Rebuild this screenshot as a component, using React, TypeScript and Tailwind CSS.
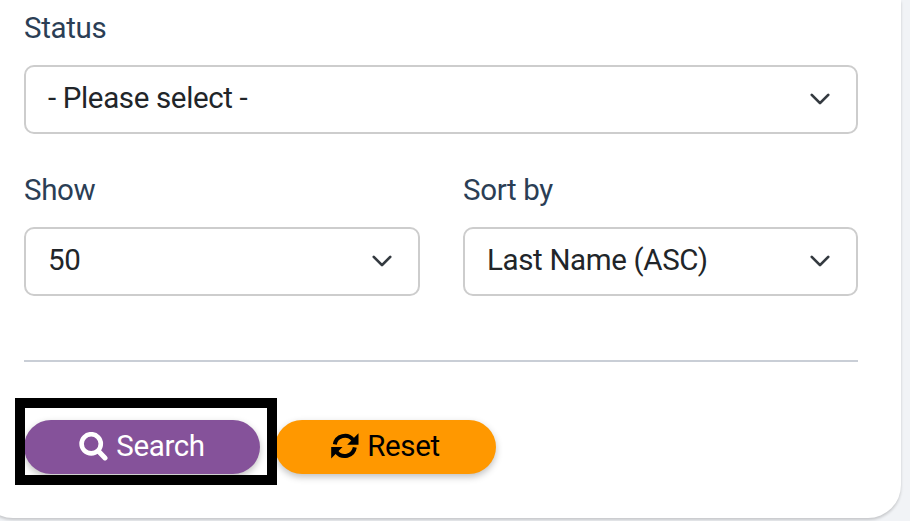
interface SelectFieldProps {
  label: string;
  value: string;
  className?: string;
}

const SearchIcon = () => (
  <svg className="h-[29px] w-[29px]" viewBox="0 0 29 29" fill="none" stroke="currentColor">
    <circle cx="12.2" cy="11.8" r="9.6" strokeWidth="4.6" />
    <path d="m19.3 19 6.7 6.9" strokeWidth="5" strokeLinecap="round" />
  </svg>
);

const RefreshIcon = () => (
  <svg className="h-[26px] w-7" viewBox="0 0 28 26" fill="none">
    <path
      d="M3.8 11.4A10.2 10.2 0 0 1 22 6.8M23.8 14.4A10.2 10.2 0 0 1 5.6 19"
      stroke="currentColor"
      strokeWidth="4"
    />
    <path d="M27.5.3v11.4H16.2zM.2 25.5V14.1h11.3z" fill="currentColor" />
  </svg>
);

const SelectField = ({ label, value, className = "" }: SelectFieldProps) => {
  return (
    <div className={`flex flex-col ${className}`}>
      <label className="h-[43px] text-[29.5px] leading-9 tracking-[-0.35px] text-[#2b3e55] whitespace-nowrap">
        {label}
      </label>
      <button className="mt-3 flex h-[69px] items-center justify-between rounded-[10px] border-2 border-[#cdcdcd] bg-white pl-[22px] pr-[25px] text-[29.5px] leading-9 tracking-[-0.35px] text-[#212529]">
        <span className="whitespace-nowrap -mt-[3px]">{value}</span>
        <svg className="-mt-0.5 h-[22px] w-[22px]" viewBox="0 0 16 16" fill="none">
          <path
            d="m2 5 6 6 6-6"
            stroke="#343a40"
            strokeWidth="2"
            strokeLinecap="round"
            strokeLinejoin="round"
          />
        </svg>
      </button>
    </div>
  );
};

export default function App() {
  return (
    <div className="h-[521px] w-[923px] overflow-hidden bg-white font-['Roboto',sans-serif]">
      <div className="h-[521px] w-[910px] overflow-hidden bg-[#f1f3f6]">
        <div className="-ml-5 h-[518px] w-[921px] rounded-b-[33px] bg-white pt-2.5 pr-[43px] pl-11 shadow-[0_2px_3px_rgba(0,0,0,0.18)]">
          <SelectField label="Status" value="- Please select -" />

          <div className="mt-[38px] flex gap-[43px]">
            <SelectField label="Show" value="50" className="w-[396px]" />
            <SelectField label="Sort by" value="Last Name (ASC)" className="w-[395px]" />
          </div>

          <hr className="mt-[64px] border-t-2 border-[#c9ced6]" />

          <div className="relative mt-[58px] flex gap-[15px]">
            <button className="flex h-[54px] w-[236px] items-center justify-center gap-2 rounded-full bg-[#85529a] pb-0.5 text-[29.5px] tracking-[-0.35px] text-white shadow-[0_3px_7px_rgba(0,0,0,0.25)]">
              <SearchIcon />
              <span>Search</span>
            </button>
            <button className="flex h-[54px] w-[221px] items-center justify-center gap-2 rounded-full bg-[#ff9800] pb-0.5 text-[29.5px] tracking-[-0.35px] text-black shadow-[0_3px_7px_rgba(0,0,0,0.25)]">
              <RefreshIcon />
              <span>Reset</span>
            </button>
            {/* highlight around the search button */}
            <div className="absolute -top-[22px] -left-[9px] h-[87px] w-[262px] border-[10px] border-black" />
          </div>
        </div>
      </div>
    </div>
  );
}
